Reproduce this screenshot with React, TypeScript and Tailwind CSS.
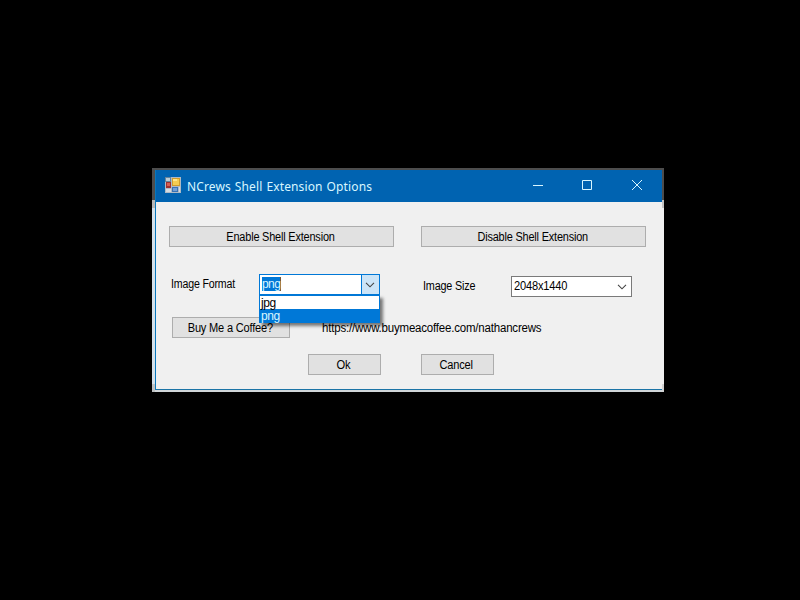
import React from "react";

type ButtonProps = { className: string; children: React.ReactNode };

function Button({ className, children }: ButtonProps) {
  return (
    <button
      className={`flex h-[21px] shrink-0 items-center justify-center border border-[#adadad] bg-[#e1e1e1] ${className}`}
    >
      {children}
    </button>
  );
}

function Chevron() {
  return (
    <svg width="10" height="6" viewBox="0 0 10 6" fill="none" stroke="#444" strokeWidth="1.1">
      <path d="M1 .8 5 4.8 9 .8" />
    </svg>
  );
}

function FormIcon() {
  return (
    <svg className="mb-[2px]" width="16" height="16" viewBox="0 0 16 16">
      <rect width="16" height="16" fill="#aebac5" />
      <rect x="0" y="0" width="6" height="5" fill="#64839b" />
      <rect x="1" y="1" width="4" height="3" fill="#bacbd5" />
      <rect x="7" y="1" width="8" height="8" fill="#cf9c2b" />
      <rect x="8" y="2" width="6" height="6" fill="#f4cc50" />
      <rect x="8" y="2" width="4" height="2" fill="#ffe589" />
      <rect x="1" y="5" width="5" height="6" fill="#9e302f" />
      <rect x="2" y="6" width="3" height="3" fill="#d65e50" />
      <rect x="1" y="12" width="5" height="3" fill="#d6dce0" />
      <rect x="7" y="10" width="6" height="5" fill="#3972b4" />
      <rect x="8" y="11" width="4" height="3" fill="#719fd6" />
      <rect x="14" y="10" width="1" height="5" fill="#d7dce1" />
    </svg>
  );
}

function TitleBar() {
  return (
    <header className="flex h-8 items-center bg-[#0063b1] pl-[9px] text-[#d8f6ff]">
      <FormIcon />
      <h1 className="ml-[6px] mt-[2px] w-[345px] whitespace-nowrap font-['Noto_Sans','Open_Sans',sans-serif] text-[12px] font-normal tracking-[0.13px] [word-spacing:0.7px]">
        NCrews Shell Extension Options
      </h1>
      <svg className="mb-[3px]" width="112" height="12" viewBox="0 0 112 12" fill="none" stroke="#d8f6ff">
        <path d="M1 6.5h10M50.5 1.5h9v9h-9zM100 1l10 10M110 1l-10 10" />
      </svg>
    </header>
  );
}

export default function App() {
  return (
    <main className="flex h-[600px] w-[800px] items-start bg-black pl-[152px] pt-[168px] font-['Liberation_Sans',Arial,sans-serif] text-[12px] leading-[14px] tracking-[-0.2px] text-black">
      <section className="flex h-[224px] w-[512px] flex-col bg-[#d1d6d9]">
        <div className="h-[2px] shrink-0 bg-[#4d4d4d]" />
        <div className="flex min-h-0 grow">
          <div className="flex w-[3px] shrink-0 flex-col">
            <div className="h-[30px] bg-[#4d4d4d]" />
            <div className="h-2 bg-[#b7b7b7]" />
            <div className="grow bg-[#d3e0ea]" />
            <div className="h-2 bg-[#bec1c3]" />
          </div>
          <div className="flex h-[220px] w-[507px] shrink-0 flex-col border-b border-l border-b-[#1b74a6] border-l-[#0878bd] bg-[#f0f0f0]">
            <TitleBar />
            <div className="mt-6 flex gap-[27px] pl-[13px]">
              <Button className="w-[225px]">
                <span className="-ml-px inline-block scale-x-[0.91]">Enable Shell Extension</span>
              </Button>
              <Button className="w-[225px]">
                <span className="-ml-px inline-block scale-x-[0.91]">Disable Shell Extension</span>
              </Button>
            </div>
            <div className="mt-[27px] flex h-[23px] items-start pl-[15px]">
              <label className="mt-[3px] w-[88px] shrink-0 origin-left scale-x-[0.885]">Image Format</label>
              <div className="relative w-[121px] shrink-0">
                <div className="flex h-[21px] border border-[#0078d7] bg-white">
                  <div className="flex grow items-start pl-[2px] pt-[2px]">
                    <span className="h-[14px] border-r border-[#74583a] bg-[#0078d7] leading-[15px] tracking-[-0.6px] text-[#d8f6ff]">png</span>
                  </div>
                  <div className="flex w-[18px] items-center justify-center border-l border-[#0078d7] bg-[#cce4f7] pr-px">
                    <Chevron />
                  </div>
                </div>
                <div className="absolute left-0 top-[21px] z-10 h-[28px] w-[121px] border border-[#0078d7] bg-white tracking-[-0.4px] shadow-[3px_3px_3px_rgba(0,0,0,0.5)]">
                  <div className="h-[13px] pl-px leading-[15px]">jpg</div>
                  <div className="h-[13px] bg-[#0078d7] pl-px leading-[15px] text-[#d8f6ff]">png</div>
                </div>
              </div>
              <label className="ml-[43px] mt-[5px] w-[88px] shrink-0 origin-left scale-x-[0.9]">Image Size</label>
              <div className="mt-[2px] flex h-[21px] w-[121px] shrink-0 items-center justify-between border border-[#7a7a7a] bg-white pl-[2px] pr-1">
                <span className="mb-px inline-block origin-left scale-x-[0.925]">2048x1440</span>
                <Chevron />
              </div>
            </div>
            <div className="mt-5 flex items-center pl-4">
              <Button className="w-[118px]">
                <span className="-ml-[2px] inline-block scale-x-[0.92]">Buy Me a Coffee?</span>
              </Button>
              <span className="ml-8 inline-block origin-left scale-x-[0.957] whitespace-nowrap">https://www.buymeacoffee.com/nathancrews</span>
            </div>
            <div className="mt-4 flex gap-10 pl-[152px]">
              <Button className="w-[73px]"><span className="-ml-[3px] inline-block scale-x-[0.93]">Ok</span></Button>
              <Button className="w-[73px]"><span className="-ml-[3px] inline-block scale-x-[0.92]">Cancel</span></Button>
            </div>
          </div>
          <div className="flex w-[2px] shrink-0 flex-col">
            <div className="h-[30px] bg-[#4d4d4d]" />
            <div className="h-2 bg-[#c4c4c4]" />
            <div className="grow bg-[#f0f0f0]" />
            <div className="h-2 bg-[#d2d2d2]" />
          </div>
        </div>
      </section>
    </main>
  );
}
